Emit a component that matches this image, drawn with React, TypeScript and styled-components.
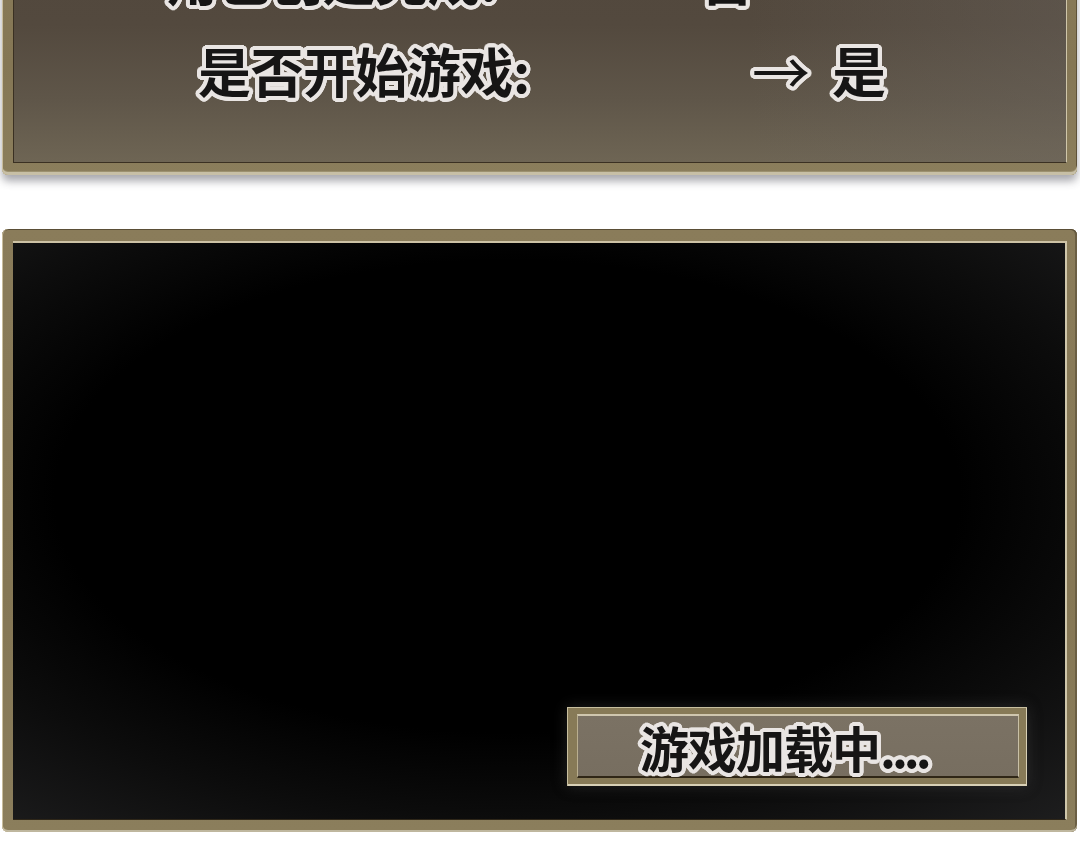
import React from "react";
import styled, { createGlobalStyle } from "styled-components";

const Global = createGlobalStyle`
  html, body { margin: 0; padding: 0; background: #ffffff; }
  body { width: 1080px; height: 844px; overflow: hidden; font-family: "Noto Sans CJK SC", "Noto Sans", sans-serif; }
`;

const ring = (r: number, color: string) => {
  const parts: string[] = [];
  const n = 24;
  for (let i = 0; i < n; i++) {
    const a = (i / n) * Math.PI * 2;
    parts.push(`${(Math.cos(a) * r).toFixed(2)}px ${(Math.sin(a) * r).toFixed(2)}px 0 ${color}`);
  }
  return parts.join(", ");
};

const OUTLINE = `${ring(4, "#e9e5e3")}, ${ring(2.5, "#e9e5e3")}, 0 0 2px #e9e5e3`;

const Page = styled.div`
  display: flex;
  flex-direction: column;
  padding: 0 3px 0 2px;
  height: 844px;
  overflow: hidden;
`;

const Frame = styled.div<{ $h: number; $mt?: number }>`
  margin-top: ${(p) => p.$mt ?? 0}px;
  height: ${(p) => p.$h}px;
  box-sizing: border-box;
  flex: none;
  display: flex;
  padding: 12px 10px 12px 11px;
  border-radius: 6px;
  background: linear-gradient(180deg, #8a7c5a 0%, #857755 60%, #8b7e5c 100%);
`;

const TopFrame = styled(Frame)`
  box-shadow:
    inset 1px 0 0 #c9bd9c,
    inset 0 -3px 0 #c7bfa6,
    inset 0 -4px 0 #9c916f,
    inset -1px 0 0 #5e5238,
    0 6px 8px rgba(60, 60, 70, 0.45);
`;

const BrownScreen = styled.div`
  flex: 1;
  display: flex;
  flex-direction: column;
  padding-top: 37px;
  gap: 36px;
  border: 1px solid #3a3022;
  border-right-color: #cfc6aa;
  background:
    linear-gradient(90deg, rgba(0,0,0,0) 0%, rgba(0,0,0,0) 70%, rgba(110,104,98,0.35) 100%),
    linear-gradient(180deg, #51473c 0%, #53493e 45%, #5f5649 75%, #6e6554 100%);
`;

const Row = styled.div<{ $label: number }>`
  display: flex;
  align-items: center;
  height: 56px;
  padding-left: ${(p) => p.$label}px;
`;

const Outlined = styled.span`
  font-family: "Noto Sans CJK SC", "Noto Sans", sans-serif;
  font-weight: 700;
  color: #161515;
  text-shadow: ${OUTLINE};
  line-height: 1;
  white-space: pre;
`;

const Label = styled(Outlined)<{ $w: number }>`
  font-size: 53px;
  width: ${(p) => p.$w}px;
  letter-spacing: -0.5px;
`;

const Value = styled(Outlined)`
  font-size: 54px;
`;

const Arrow = styled(Outlined)`
  font-size: 58px;
  font-weight: 400;
  margin-right: 22px;
`;

const Gap = styled.div`
  height: 54px;
  flex: none;
`;

const BottomFrame = styled(Frame)`
  box-shadow:
    inset 1px 0 0 #c9bd9c,
    inset 0 1px 0 #5a4e36,
    inset 0 -2px 0 #bfb79e,
    inset -2px 0 0 #6b5f44;
`;

const BlackScreen = styled.div`
  flex: 1;
  display: flex;
  align-items: flex-end;
  justify-content: flex-end;
  padding: 0 38px 33px 0;
  border-top: 2px solid #cdc2a5;
  border-right: 2px solid #cfc6aa;
  border-bottom: 1px solid #2e2618;
  background: radial-gradient(ellipse 86% 82% at 47% 44%, #000000 50%, #0c0c0c 68%, #232324 100%);
`;

const LoadFrame = styled.div`
  width: 460px;
  height: 79px;
  box-sizing: border-box;
  display: flex;
  padding: 7px 8px 8px 10px;
  background: #877a57;
  box-shadow:
    inset 1px 1px 0 #c8bf9f,
    inset -1px -2px 0 #d8d0b6,
    0 0 14px rgba(90, 90, 90, 0.35);
`;

const LoadInner = styled.div`
  flex: 1;
  display: flex;
  align-items: center;
  padding-left: 62px;
  background: linear-gradient(180deg, #7b7264 0%, #776e60 100%);
  border-top: 2px solid #cfc6ae;
  border-left: 1px solid #b9ae90;
  border-bottom: 2px solid #2f2616;
  border-right: 1px solid #c9c0a6;
`;

const LoadText = styled(Outlined)`
  font-size: 49px;
  letter-spacing: -1px;
`;

const Dots = styled.span`
  letter-spacing: -4px;
`;

export default function App() {
  return (
    <>
      <Global />
      <Page>
        <TopFrame $h={275} $mt={-100}>
          <BrownScreen>
            <Row $label={151}>
              <Label $w={535}>角色创建完成:</Label>
              <Value>否</Value>
            </Row>
            <Row $label={184}>
              <Label $w={554}>是否开始游戏:</Label>
              <Arrow>→</Arrow>
              <Value>是</Value>
            </Row>
          </BrownScreen>
        </TopFrame>
        <Gap />
        <BottomFrame $h={603}>
          <BlackScreen>
            <LoadFrame>
              <LoadInner>
                <LoadText>
                  游戏加载中<Dots>....</Dots>
                </LoadText>
              </LoadInner>
            </LoadFrame>
          </BlackScreen>
        </BottomFrame>
      </Page>
    </>
  );
}
